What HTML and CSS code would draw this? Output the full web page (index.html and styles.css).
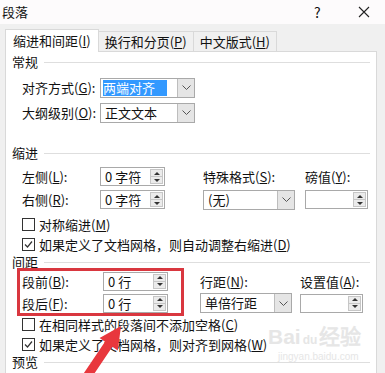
FILE: index.html
```html
<!DOCTYPE html>
<html lang="zh-CN">
<head>
    <meta charset="UTF-8">
    <title>段落</title>
    <link rel="stylesheet" href="styles.css">
</head>
<body>
<div class="dialog">

    <!-- Thanh tiêu đề -->
    <div class="titlebar">
        <span class="title">段落</span>
        <span class="help">?</span>
        <span class="close">
            <svg width="12" height="12" viewBox="0 0 12 12"><path d="M1 1 L11 11 M11 1 L1 11" stroke="#222" stroke-width="1.1" fill="none"/></svg>
        </span>
    </div>

    <div class="body">
        <div class="tabs">
            <div class="tab active">缩进和间距(<u>I</u>)</div>
            <div class="tab">换行和分页(<u>P</u>)</div>
            <div class="tab">中文版式(<u>H</u>)</div>
        </div>

        <div class="page">
            <!-- 常规 -->
            <div class="group-title"><span>常规</span></div>
            <div class="row first">
                <span class="lbl">对齐方式(<u>G</u>):</span>
                <div class="select wide">
                    <span class="value"><span class="selected">两端对齐</span></span>
                    <span class="drop"><svg width="9" height="5" viewBox="0 0 9 5"><path d="M0.5 0.5 L4.5 4.5 L8.5 0.5" stroke="#555" fill="none"/></svg></span>
                </div>
            </div>
            <div class="row">
                <span class="lbl">大纲级别(<u>O</u>):</span>
                <div class="select wide">
                    <span class="value">正文文本</span>
                    <span class="drop"><svg width="9" height="5" viewBox="0 0 9 5"><path d="M0.5 0.5 L4.5 4.5 L8.5 0.5" stroke="#555" fill="none"/></svg></span>
                </div>
            </div>

            <!-- 缩进 -->
            <div class="group-title indent-title"><span>缩进</span></div>
            <div class="grid">
                <span class="lbl">左侧(<u>L</u>):</span>
                <div class="spin"><span class="value">0 字符</span><span class="spin-btn"><i class="up"></i><i class="down"></i></span></div>
                <span class="lbl">特殊格式(<u>S</u>):</span>
                <span class="lbl">磅值(<u>Y</u>):</span>

                <span class="lbl">右侧(<u>R</u>):</span>
                <div class="spin"><span class="value">0 字符</span><span class="spin-btn"><i class="up"></i><i class="down"></i></span></div>
                <div class="select mid">
                    <span class="value">(无)</span>
                    <span class="drop"><svg width="9" height="5" viewBox="0 0 9 5"><path d="M0.5 0.5 L4.5 4.5 L8.5 0.5" stroke="#555" fill="none"/></svg></span>
                </div>
                <div class="spin small"><span class="value"></span><span class="spin-btn"><i class="up"></i><i class="down"></i></span></div>
            </div>
            <div class="check first-check">
                <span class="cb"></span>
                <span>对称缩进(<u>M</u>)</span>
            </div>
            <div class="check">
                <span class="cb"><svg width="11" height="11" viewBox="0 0 11 11"><path d="M2 5.5 L4.5 8 L9 2.5" stroke="#333" stroke-width="1.2" fill="none"/></svg></span>
                <span>如果定义了文档网格，则自动调整右缩进(<u>D</u>)</span>
            </div>

            <!-- 间距 -->
            <div class="group-title tight"><span>间距</span></div>
            <div class="spacing">
                <div class="spacing-left">
                    <div class="srow">
                        <span class="lbl">段前(<u>B</u>):</span>
                        <div class="spin"><span class="value">0 行</span><span class="spin-btn"><i class="up"></i><i class="down"></i></span></div>
                    </div>
                    <div class="srow">
                        <span class="lbl">段后(<u>F</u>):</span>
                        <div class="spin"><span class="value">0 行</span><span class="spin-btn"><i class="up"></i><i class="down"></i></span></div>
                    </div>
                </div>
                <div class="spacing-right">
                    <span class="lbl">行距(<u>N</u>):</span>
                    <span class="lbl">设置值(<u>A</u>):</span>
                    <div class="select mid">
                        <span class="value">单倍行距</span>
                        <span class="drop"><svg width="9" height="5" viewBox="0 0 9 5"><path d="M0.5 0.5 L4.5 4.5 L8.5 0.5" stroke="#555" fill="none"/></svg></span>
                    </div>
                    <div class="spin small"><span class="value"></span><span class="spin-btn"><i class="up"></i><i class="down"></i></span></div>
                </div>
            </div>
            <div class="check">
                <span class="cb"></span>
                <span>在相同样式的段落间不添加空格(<u>C</u>)</span>
            </div>
            <div class="check">
                <span class="cb"><svg width="11" height="11" viewBox="0 0 11 11"><path d="M2 5.5 L4.5 8 L9 2.5" stroke="#333" stroke-width="1.2" fill="none"/></svg></span>
                <span>如果定义了文档网格，则对齐到网格(<u>W</u>)</span>
            </div>

            <!-- 预览 -->
            <div class="group-title tight"><span>预览</span></div>
        </div>
    </div>

    <!-- Watermark + mũi tên đỏ (lớp phủ) -->
    <div class="watermark">
        <div class="wm-logo">Bai<span class="paw">du</span>经验</div>
        <div class="wm-url">jingyan.baidu.com</div>
    </div>
    <svg class="arrow" width="385" height="373" viewBox="0 0 385 373">
        <polygon points="121,326 117.8,350.5 112.4,346.8 90,380 82.6,375 105,341.8 99.6,338.1" fill="#e8373d"/>
    </svg>
</div>
</body>
</html>
```

FILE: styles.css
```css
body {
    margin: 0;
    padding: 0;
    font-family: 'Noto Sans CJK SC', 'Microsoft YaHei', sans-serif;
    font-size: 13px;
    color: #111;
    background: #fff;
}
u {
    text-decoration: underline;
    text-underline-offset: 1px;
}
.dialog {
    position: relative;
    width: 385px;
    height: 373px;
    overflow: hidden;
    background: #fff;
}
.titlebar {
    display: flex;
    align-items: center;
    height: 24px;
    line-height: 24px;
    padding: 0 15px 0 2px;
    background: #fdfbfc;
}
.title {
    flex: 1;
}
.help {
    width: 8px;
    margin-right: 36px;
    font-size: 14px;
}
.close {
    display: flex;
}
.body {
    background: #f0f0f0;
    padding: 5px 8px 0 5px;
    height: 400px;
}
.tabs {
    display: flex;
    align-items: flex-end;
    height: 22px;
}
.tab {
    height: 20px;
    line-height: 20px;
    padding: 0 6px;
    border: 1px solid #d9d9d9;
    border-bottom: none;
    border-left: none;
    box-sizing: border-box;
    background: #f0f0f0;
}
.tab.active {
    height: 23px;
    line-height: 22px;
    padding: 0 7px;
    border-left: 1px solid #d9d9d9;
    background: #fff;
    margin-bottom: -1px;
    position: relative;
    z-index: 1;
}
.page {
    background: #fff;
    border: 1px solid #d9d9d9;
    padding: 1px 6px 0 6px;
    height: 340px;
}
.group-title {
    display: flex;
    align-items: center;
    height: 18px;
    line-height: 18px;
}
.group-title::after {
    content: "";
    flex: 1;
    height: 1px;
    background: #dedede;
    margin-left: 6px;
}
.group-title.tight {
    height: 16px;
    line-height: 16px;
}
.indent-title {
    margin-top: 19px;
}
.row {
    display: flex;
    align-items: center;
    height: 25px;
    padding-left: 10px;
}
.row.first {
    margin-top: 4px;
}
.lbl {
    width: 78px;
    white-space: nowrap;
}
.select {
    display: flex;
    height: 20px;
    border: 1px solid #a9a9a9;
    box-sizing: border-box;
    background: #fff;
}
.select.wide {
    width: 95px;
}
.select.mid {
    width: 92px;
}
.select .value {
    flex: 1;
    display: flex;
    align-items: center;
    padding-left: 4px;
    line-height: 18px;
}
.selected {
    background: #3399ff;
    color: #fff;
    line-height: 14px;
    padding: 1px 12px 1px 0;
    margin-left: -2px;
}
.drop {
    width: 16px;
    display: flex;
    align-items: center;
    justify-content: center;
    background: #e5e5e5;
    border-left: 1px solid #bdbdbd;
}
.grid {
    display: grid;
    grid-template-columns: 78px 103px 102px 70px;
    grid-auto-rows: 23px;
    align-items: center;
    padding-left: 10px;
    margin-top: 3px;
}
.spin {
    display: flex;
    width: 65px;
    height: 19px;
    border: 1px solid #a9a9a9;
    box-sizing: border-box;
    background: #fff;
}
.spin.small {
    width: 63px;
}
.spin .value {
    flex: 1;
    padding-left: 4px;
    line-height: 17px;
    white-space: nowrap;
}
.spin-btn {
    width: 13px;
    margin: 1px;
    display: flex;
    flex-direction: column;
    background: #ebebeb;
    border: 1px solid #c6c6c6;
    box-sizing: border-box;
}
.spin-btn i {
    flex: 1;
    display: flex;
    align-items: center;
    justify-content: center;
}
.spin-btn i.up {
    border-bottom: 1px solid #c6c6c6;
}
.spin-btn i.up::before {
    content: "";
    border-left: 3px solid transparent;
    border-right: 3px solid transparent;
    border-bottom: 3px solid #333;
}
.spin-btn i.down::before {
    content: "";
    border-left: 3px solid transparent;
    border-right: 3px solid transparent;
    border-top: 3px solid #333;
}
.check {
    display: flex;
    align-items: center;
    height: 20px;
    padding-left: 10px;
    gap: 4px;
}
.first-check {
    margin-top: 3px;
}
.cb {
    width: 13px;
    height: 13px;
    border: 1px solid #333;
    box-sizing: border-box;
    background: #fff;
    display: flex;
    align-items: center;
    justify-content: center;
}
.spacing {
    display: flex;
    align-items: flex-start;
}
.spacing-left {
    width: 164px;
    margin-left: 7px;
    padding-left: 3px;
    outline: 3px solid #d9373f;
    outline-offset: -1px;
}
.srow {
    display: flex;
    align-items: center;
    height: 22px;
}
.srow .lbl {
    width: 81px;
}
.spacing-right {
    display: grid;
    grid-template-columns: 100px 70px;
    grid-auto-rows: 22px;
    align-items: center;
    margin-left: 18px;
}
.watermark {
    position: absolute;
    left: 268px;
    top: 326px;
    color: #e6e6e6;
    font-family: 'Liberation Sans', Arial, sans-serif;
}
.wm-logo {
    font-size: 21px;
    font-weight: bold;
    line-height: 22px;
    white-space: nowrap;
}
.paw {
    font-size: 12px;
    padding: 0 2px;
}
.wm-url {
    font-size: 10px;
    line-height: 12px;
    padding-left: 10px;
}
.arrow {
    position: absolute;
    left: 0;
    top: 0;
}
```
